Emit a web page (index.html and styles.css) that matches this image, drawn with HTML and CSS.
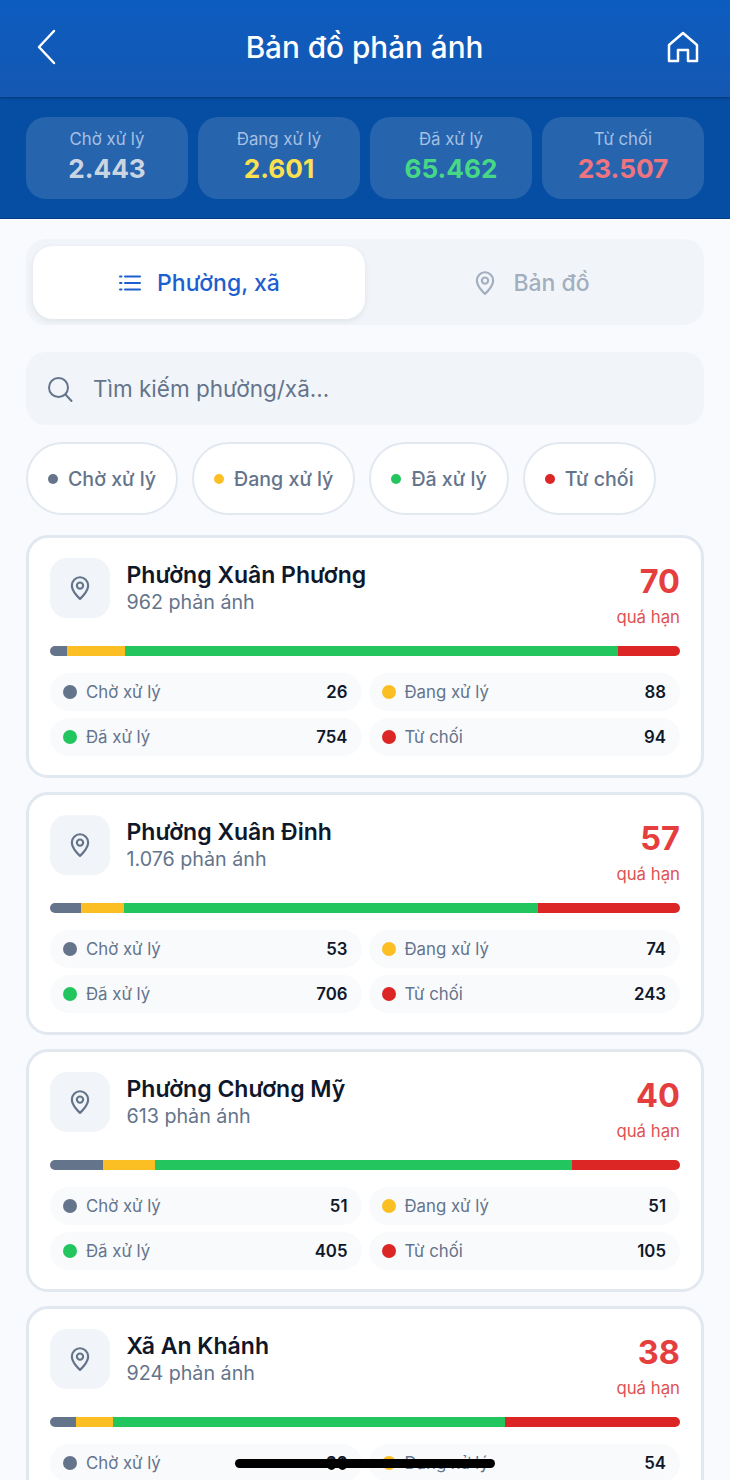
FILE: index.html
```html
<!DOCTYPE html>
<html lang="vi">
<head>
    <meta charset="UTF-8">
    <meta name="viewport" content="width=device-width, initial-scale=1.0">
    <title>Bản đồ phản ánh</title>
    <link rel="stylesheet" href="styles.css">
</head>
<body>
<svg class="sprites" width="0" height="0" aria-hidden="true">
    <symbol id="pin" viewBox="0 0 24 24">
        <path d="M12 22s7.500-6.600 7.500-12.400A7.500 7.500 0 0 0 4.500 9.600C4.500 15.400 12 22 12 22z"/>
        <circle cx="12" cy="9.800" r="2.900"/>
    </symbol>
</svg>

<header class="app-bar">
    <button class="icon-btn" aria-label="Quay lại">
        <svg width="30" height="38" viewBox="0 0 30 38"><path d="M21 3 6 19l15 16"/></svg>
    </button>
    <h1 class="title">Bản đồ phản ánh</h1>
    <button class="icon-btn" aria-label="Trang chủ">
        <svg width="34" height="34" viewBox="0 0 34 34"><path d="M3 31V15L17 3l14 12v16H22V20H12v11z"/></svg>
    </button>
</header>

<section class="summary">
    <div class="tile"><span class="tile-label">Chờ xử lý</span><strong class="tile-value slate">2.443</strong></div>
    <div class="tile"><span class="tile-label">Đang xử lý</span><strong class="tile-value yellow">2.601</strong></div>
    <div class="tile"><span class="tile-label">Đã xử lý</span><strong class="tile-value green">65.462</strong></div>
    <div class="tile"><span class="tile-label">Từ chối</span><strong class="tile-value red">23.507</strong></div>
</section>

<main class="content">
    <div class="tabs">
        <div class="tab active">
            <svg width="24" height="24" viewBox="0 0 24 24"><path d="M7 5.500h15M7 12h15M7 18.500h15M2 5.500h1.500M2 12h1.500M2 18.500h1.500"/></svg>
            <span>Phường, xã</span>
        </div>
        <div class="tab">
            <svg class="pin" width="26" height="26"><use href="#pin"/></svg>
            <span>Bản đồ</span>
        </div>
    </div>

    <div class="search">
        <svg width="28" height="28" viewBox="0 0 28 28"><circle cx="12.500" cy="12.500" r="9.500"/><path d="m19.500 19.500 6 6.500"/></svg>
        <span>Tìm kiếm phường/xã...</span>
    </div>

    <div class="chips">
        <div class="chip"><i class="dot bg-slate"></i>Chờ xử lý</div>
        <div class="chip"><i class="dot bg-amber"></i>Đang xử lý</div>
        <div class="chip"><i class="dot bg-green"></i>Đã xử lý</div>
        <div class="chip"><i class="dot bg-red"></i>Từ chối</div>
    </div>

    <article class="card">
        <div class="card-head">
            <div class="pin-box"><svg class="pin" width="26" height="26"><use href="#pin"/></svg></div>
            <div class="card-name">
                <h2>Phường Xuân Phương</h2>
                <p>962 phản ánh</p>
            </div>
            <div class="overdue"><b>70</b><span>quá hạn</span></div>
        </div>
        <div class="bar">
            <i class="bg-slate" style="flex-grow: 26"></i><i class="bg-amber" style="flex-grow: 88"></i><i class="bg-green" style="flex-grow: 754"></i><i class="bg-red" style="flex-grow: 94"></i>
        </div>
        <div class="stats">
            <div class="stat"><i class="stat-dot bg-slate"></i><span>Chờ xử lý</span><b>26</b></div>
            <div class="stat"><i class="stat-dot bg-amber"></i><span>Đang xử lý</span><b>88</b></div>
            <div class="stat"><i class="stat-dot bg-green"></i><span>Đã xử lý</span><b>754</b></div>
            <div class="stat"><i class="stat-dot bg-red"></i><span>Từ chối</span><b>94</b></div>
        </div>
    </article>

    <article class="card">
        <div class="card-head">
            <div class="pin-box"><svg class="pin" width="26" height="26"><use href="#pin"/></svg></div>
            <div class="card-name">
                <h2>Phường Xuân Đỉnh</h2>
                <p>1.076 phản ánh</p>
            </div>
            <div class="overdue"><b>57</b><span>quá hạn</span></div>
        </div>
        <div class="bar">
            <i class="bg-slate" style="flex-grow: 53"></i><i class="bg-amber" style="flex-grow: 74"></i><i class="bg-green" style="flex-grow: 706"></i><i class="bg-red" style="flex-grow: 243"></i>
        </div>
        <div class="stats">
            <div class="stat"><i class="stat-dot bg-slate"></i><span>Chờ xử lý</span><b>53</b></div>
            <div class="stat"><i class="stat-dot bg-amber"></i><span>Đang xử lý</span><b>74</b></div>
            <div class="stat"><i class="stat-dot bg-green"></i><span>Đã xử lý</span><b>706</b></div>
            <div class="stat"><i class="stat-dot bg-red"></i><span>Từ chối</span><b>243</b></div>
        </div>
    </article>

    <article class="card">
        <div class="card-head">
            <div class="pin-box"><svg class="pin" width="26" height="26"><use href="#pin"/></svg></div>
            <div class="card-name">
                <h2>Phường Chương Mỹ</h2>
                <p>613 phản ánh</p>
            </div>
            <div class="overdue"><b>40</b><span>quá hạn</span></div>
        </div>
        <div class="bar">
            <i class="bg-slate" style="flex-grow: 51"></i><i class="bg-amber" style="flex-grow: 51"></i><i class="bg-green" style="flex-grow: 405"></i><i class="bg-red" style="flex-grow: 105"></i>
        </div>
        <div class="stats">
            <div class="stat"><i class="stat-dot bg-slate"></i><span>Chờ xử lý</span><b>51</b></div>
            <div class="stat"><i class="stat-dot bg-amber"></i><span>Đang xử lý</span><b>51</b></div>
            <div class="stat"><i class="stat-dot bg-green"></i><span>Đã xử lý</span><b>405</b></div>
            <div class="stat"><i class="stat-dot bg-red"></i><span>Từ chối</span><b>105</b></div>
        </div>
    </article>

    <article class="card">
        <div class="card-head">
            <div class="pin-box"><svg class="pin" width="26" height="26"><use href="#pin"/></svg></div>
            <div class="card-name">
                <h2>Xã An Khánh</h2>
                <p>924 phản ánh</p>
            </div>
            <div class="overdue"><b>38</b><span>quá hạn</span></div>
        </div>
        <div class="bar">
            <i class="bg-slate" style="flex-grow: 38"></i><i class="bg-amber" style="flex-grow: 54"></i><i class="bg-green" style="flex-grow: 575"></i><i class="bg-red" style="flex-grow: 257"></i>
        </div>
        <div class="stats">
            <div class="stat"><i class="stat-dot bg-slate"></i><span>Chờ xử lý</span><b>38</b></div>
            <div class="stat"><i class="stat-dot bg-amber"></i><span>Đang xử lý</span><b>54</b></div>
        </div>
    </article>
</main>

<div class="home-bar"><i></i><i></i></div>
</body>
</html>
```

FILE: styles.css
```css
* {
    box-sizing: border-box;
}

html, body {
    height: 1480px;
    overflow: hidden;
}

body {
    margin: 0;
    font-family: Inter, "Noto Sans", sans-serif;
    background-color: #f8fafd;
    color: #0f172a;
    position: relative;
}

.sprites {
    position: absolute;
}

h1, h2, p {
    margin: 0;
    font-weight: inherit;
}

svg {
    fill: none;
    stroke: currentColor;
    stroke-width: 2;
    stroke-linecap: round;
    stroke-linejoin: round;
    flex-shrink: 0;
}

i {
    display: block;
}

.bg-slate { background-color: #64748b; }
.bg-amber { background-color: #fbbf24; }
.bg-green { background-color: #22c55e; }
.bg-red { background-color: #dc2626; }

/* Top bar */
.app-bar {
    height: 97px;
    padding: 0 30px 4px 33px;
    display: flex;
    align-items: center;
    justify-content: space-between;
    background: linear-gradient(180deg, #0c5cc0 0%, #1558b2 100%);
    color: #fff;
    box-shadow: 0 1px 2px rgba(0, 30, 80, 0.5);
    position: relative;
}

.icon-btn {
    border: none;
    background: none;
    padding: 0;
    color: inherit;
    display: flex;
}

.icon-btn svg path {
    stroke-width: 2.5;
}

.title {
    font-size: 29.7px;
    font-weight: 500;
}

/* Summary tiles */
.summary {
    height: 122px;
    padding: 20px 26px 19px;
    display: grid;
    grid-template-columns: repeat(4, 1fr);
    gap: 10px;
    background-color: #064ea3;
    border-bottom: 1px solid #043f86;
}

.tile {
    border-radius: 20px;
    background-color: rgba(255, 255, 255, 0.13);
    display: flex;
    flex-direction: column;
    align-items: center;
    padding-top: 11px;
}

.tile-label {
    font-size: 16.8px;
    line-height: 22px;
    color: #a5c0e3;
}

.tile-value {
    font-size: 26.2px;
    line-height: 38px;
    font-weight: 700;
}

.slate { color: #cbd5e1; }
.yellow { color: #fbe04f; }
.green { color: #46d884; }
.red { color: #ee7480; }

/* Content */
.content {
    padding: 20px 26px 0;
}

.tabs {
    height: 86px;
    padding: 7px 7px 6px;
    border-radius: 20px;
    background-color: #f1f5f9;
    display: grid;
    grid-template-columns: 1fr 1fr;
}

.tab {
    display: flex;
    align-items: center;
    justify-content: center;
    gap: 15px;
    border-radius: 20px;
    font-size: 23px;
    font-weight: 500;
    color: #a3afbf;
}

.tab.active {
    background-color: #fff;
    color: #1d5fd0;
    box-shadow: 0 2px 6px rgba(15, 23, 42, 0.08);
}

.search {
    height: 73px;
    margin-top: 27px;
    padding: 0 20px;
    border-radius: 20px;
    background-color: #f1f5f9;
    display: flex;
    align-items: center;
    gap: 19px;
    font-size: 22.5px;
    color: #64748b;
}

.chips {
    margin-top: 17px;
    display: flex;
    gap: 14px;
}

.chip {
    height: 73px;
    padding: 0 20px;
    border: 2px solid #e2e8f0;
    border-radius: 37px;
    background-color: #fff;
    display: flex;
    align-items: center;
    gap: 10px;
    font-size: 19.6px;
    font-weight: 500;
    color: #64748b;
}

.dot {
    width: 10px;
    height: 10px;
    border-radius: 50%;
}

/* Ward cards */
.card {
    height: 243px;
    margin-top: 20px;
    padding: 20px 21px;
    border: 3px solid #e2e8f0;
    border-radius: 22px;
    background-color: #fff;
}

.card + .card {
    margin-top: 14px;
}

.card-head {
    display: flex;
    height: 60px;
}

.pin-box {
    width: 60px;
    height: 60px;
    border-radius: 17px;
    background-color: #f1f5f9;
    color: #64748b;
    display: flex;
    align-items: center;
    justify-content: center;
}

.card-name {
    margin-left: 16.5px;
    flex: 1;
}

.card-name h2 {
    font-size: 23px;
    line-height: 32px;
    padding-top: 1px;
    font-weight: 600;
}

.card-name p {
    margin-top: -1px;
    font-size: 19.7px;
    line-height: 24px;
    color: #64748b;
}

.overdue {
    display: flex;
    flex-direction: column;
    align-items: flex-end;
}

.overdue b {
    font-size: 32.5px;
    line-height: 46px;
    padding-top: 1px;
    font-weight: 700;
    color: #e53e3e;
}

.overdue span {
    font-size: 16.8px;
    line-height: 25px;
    color: #e05252;
}

.bar {
    margin-top: 28px;
    height: 10px;
    border-radius: 5px;
    overflow: hidden;
    display: flex;
}

.stats {
    margin-top: 17px;
    display: grid;
    grid-template-columns: 1fr 1fr;
    gap: 7px;
}

.stat {
    height: 38px;
    padding: 0 14px 0 13px;
    border-radius: 19px;
    background-color: #f8fafc;
    display: flex;
    align-items: center;
    font-size: 16.8px;
    color: #64748b;
}

.stat-dot {
    width: 14px;
    height: 14px;
    margin-right: 9px;
    border-radius: 50%;
}

.stat b {
    margin-left: auto;
    font-weight: 600;
    color: #0f172a;
}

/* Home indicator laid over the page */
.home-bar {
    position: absolute;
    left: 235px;
    top: 1459px;
    width: 260px;
    height: 9px;
    padding-left: 92px;
    border-radius: 5px;
    background-color: #000;
    display: flex;
    align-items: center;
    gap: 2px;
}

.home-bar i {
    width: 9px;
    height: 12px;
    border-radius: 50%;
    background-color: #000;
}
```
